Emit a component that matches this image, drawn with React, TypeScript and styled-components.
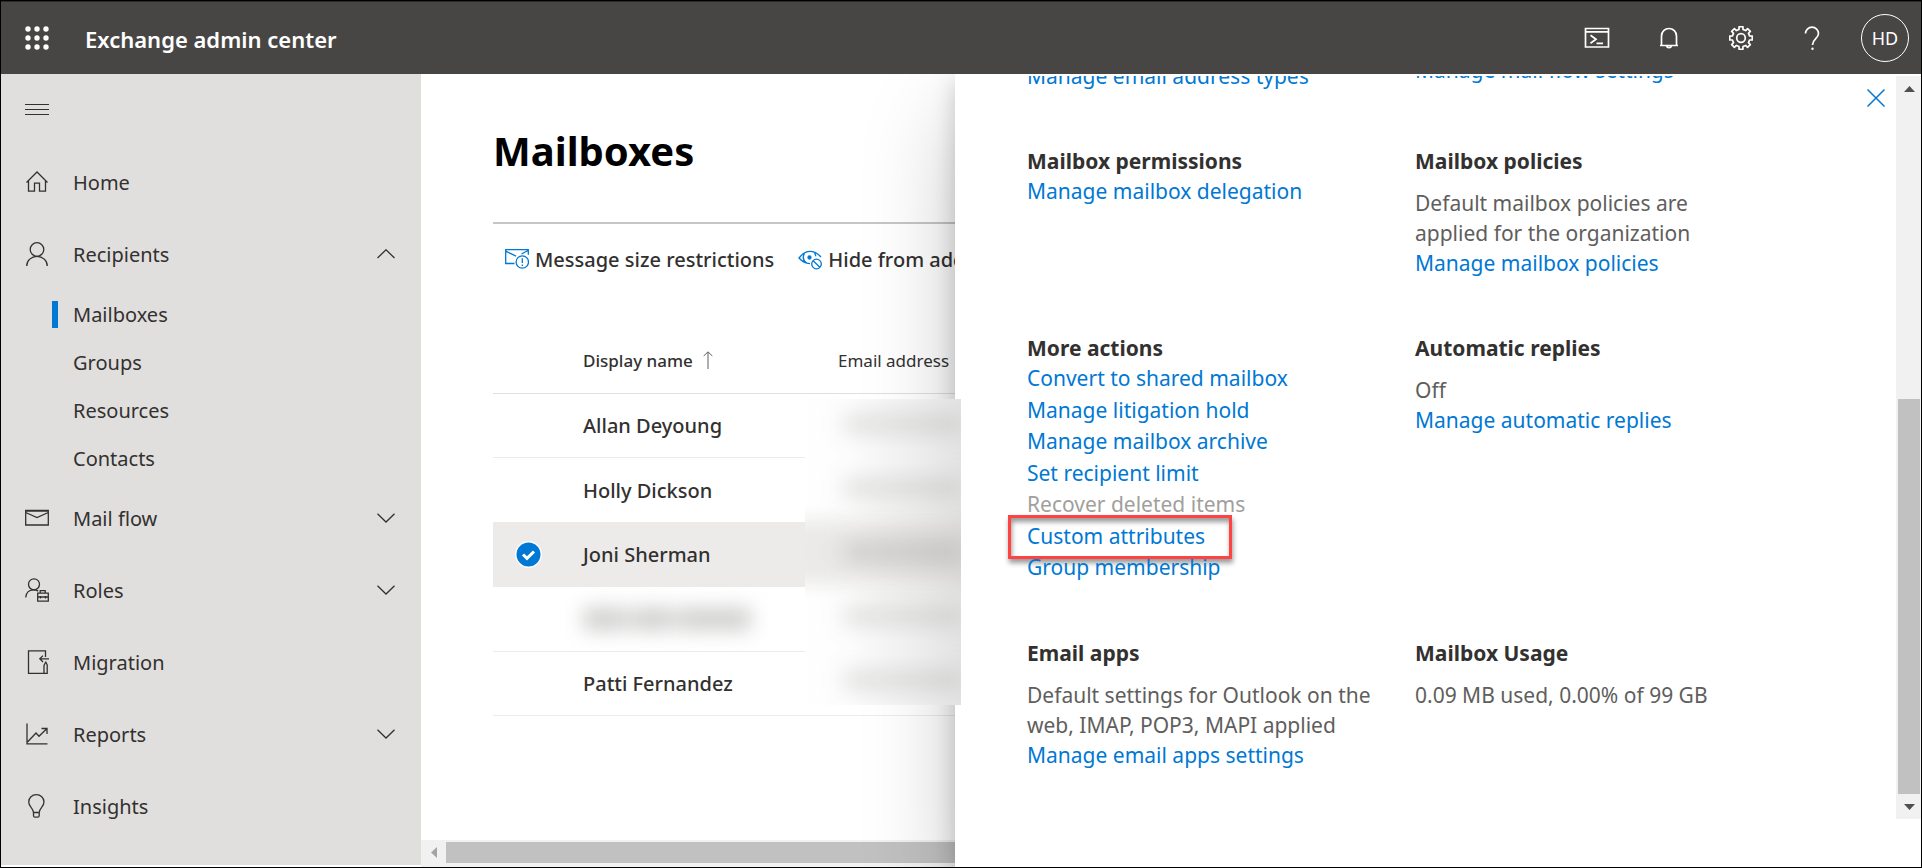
import React from "react";
import styled, { createGlobalStyle } from "styled-components";

const GlobalStyle = createGlobalStyle`
  *, *::before, *::after { box-sizing: border-box; }
  body {
    margin: 0;
    font-family: "Noto Sans", "Open Sans", sans-serif;
    font-size: 20px;
    color: #323130;
    background: #fff;
  }
  a { color: inherit; text-decoration: none; }
  button {
    margin: 0;
    padding: 0;
    border: 0;
    background: none;
    color: inherit;
    font: inherit;
    cursor: pointer;
  }
  svg { display: block; flex: none; }
`;

const Page = styled.div`
  display: flex;
  flex-direction: column;
  min-height: 100vh;
  border: 1px solid #000;
  overflow: hidden;
`;

/* ---------- header ---------- */

const Header = styled.header`
  display: flex;
  align-items: center;
  height: 73px;
  color: #fff;
  background: #484644;
  border-top: 1px solid #2b2a29;
  position: relative;
  z-index: 3;
`;

const HeaderButton = styled.button`
  display: flex;
  align-items: center;
  justify-content: center;
  width: 72px;
  height: 72px;
`;

const AppName = styled.span`
  flex: 1;
  padding: 2px 0 0 12px;
  font-size: 22px;
  font-weight: 600;
`;

const Avatar = styled.span`
  display: flex;
  align-items: center;
  justify-content: center;
  width: 48px;
  height: 48px;
  border: 1px solid #fff;
  border-radius: 50%;
  font-size: 18px;
`;

/* ---------- side navigation ---------- */

const Body = styled.div`
  display: flex;
  flex: 1;
`;

const Sidebar = styled.nav`
  flex: none;
  width: 420px;
  margin-bottom: 2px;
  background: #e1dfdd;
`;

const MenuToggle = styled.button`
  display: flex;
  align-items: center;
  justify-content: center;
  width: 72px;
  height: 72px;
`;

const NavLink = styled.a`
  display: flex;
  align-items: center;
  height: 72px;
  padding-right: 26px;
`;

const NavIcon = styled.span`
  display: flex;
  justify-content: center;
  width: 72px;
`;

const NavLabel = styled.span`
  flex: 1;
`;

const SubLink = styled.a`
  display: flex;
  align-items: center;
  gap: 15px;
  height: 48px;
  padding-left: 51px;
`;

const Marker = styled.span<{ $active: boolean }>`
  width: 6px;
  height: 27px;
  background: ${(p) => (p.$active ? "#0078d4" : "transparent")};
`;

/* ---------- mailbox list ---------- */

const Main = styled.main`
  display: flex;
  flex-direction: column;
  flex: 1;
  min-width: 0;
`;

const MainContent = styled.div`
  flex: 1;
  padding-left: 72px;
`;

const Title = styled.h1`
  margin: 0;
  padding: 47px 0 41px;
  border-bottom: 2px solid #c8c6c4;
  font-size: 40px;
  line-height: 60px;
  font-weight: 700;
  color: #000;
`;

const CommandBar = styled.div`
  display: flex;
  align-items: center;
  gap: 24px;
  height: 70px;
  padding-left: 12px;
`;

const Command = styled.button`
  display: flex;
  align-items: center;
  gap: 6px;
  white-space: nowrap;
  font-weight: 500;
`;

const TableArea = styled.div`
  position: relative;
  margin-top: 33px;
`;

const Table = styled.table`
  width: 100%;
  table-layout: fixed;
  border-collapse: separate;
  border-spacing: 0;
`;

const HeadCell = styled.th<{ $strong?: boolean; $width?: number }>`
  width: ${(p) => (p.$width ? `${p.$width}px` : "auto")};
  height: 67px;
  padding: 0;
  border-bottom: 1px solid #e1dfdd;
  text-align: left;
  white-space: nowrap;
  font-size: 17px;
  font-weight: ${(p) => (p.$strong ? 500 : 400)};
`;

const SortLabel = styled.span`
  display: flex;
  align-items: center;
  gap: 10px;
`;

const Row = styled.tr<{ $selected: boolean }>`
  height: 64px;
  background: ${(p) => (p.$selected ? "#edebe9" : "transparent")};
  &:nth-child(even) {
    height: 65px;
  }
`;

const Cell = styled.td`
  padding: 0;
  border-bottom: 1px solid #edebe9;
  font-weight: 500;
`;

const CheckLabel = styled.label`
  display: flex;
  position: relative;
  width: 27px;
  height: 27px;
  margin-left: 22px;
`;

const CheckInput = styled.input`
  position: absolute;
  inset: 0;
  margin: 0;
  opacity: 0;
`;

const HiddenName = styled.span`
  display: flex;
  gap: 4px;
  width: 168px;
  height: 22px;
  filter: blur(10px);
`;

const Smudge = styled.span<{ $grow: number }>`
  flex: ${(p) => p.$grow};
  background: #cfcecd;
`;

const AddressMask = styled.div`
  position: absolute;
  z-index: 2;
  left: 312px;
  right: -6px;
  top: 72px;
  display: flex;
  flex-direction: column;
  justify-content: center;
  height: 306px;
  overflow: hidden;
  background: linear-gradient(to right, #fff 0, #fcfcfc 30%, #efefef 70%, #e3e3e3 100%);
`;

const MaskedAddress = styled.span<{ $selected: boolean }>`
  display: flex;
  align-items: center;
  flex: none;
  height: 64px;
  margin: 0 -20px;
  padding: 0 20px 0 58px;
  background: ${(p) => (p.$selected ? "rgba(190, 186, 180, 0.3)" : "transparent")};
  filter: blur(10px);
  &::before {
    content: "";
    flex: 1;
    height: 22px;
    background: ${(p) => (p.$selected ? "rgba(120, 118, 115, 0.2)" : "rgba(120, 118, 115, 0.16)")};
  }
`;

const HorizontalBar = styled.div`
  display: flex;
  height: 27px;
  padding: 2px 0 4px;
  background: #f1f1f1;
`;

const BarArrow = styled.button`
  display: flex;
  align-items: center;
  justify-content: center;
  width: 25px;
`;

const HorizontalThumb = styled.div`
  flex: 1;
  background: #c1c1c1;
`;

/* ---------- details panel ---------- */

const Panel = styled.aside`
  position: relative;
  z-index: 1;
  display: flex;
  width: 966px;
  padding-top: 2px;
  background: #fff;
  box-shadow: 0 38px 86px rgba(0, 0, 0, 0.22), 0 7px 22px rgba(0, 0, 0, 0.18);
`;

const PanelContent = styled.div`
  flex: 1;
  display: flex;
  flex-direction: column;
  gap: 55px;
  padding: 0 93px 0 72px;
  font-size: 21px;
  line-height: 30px;
`;

const PanelRow = styled.div<{ $scrolledAway?: boolean }>`
  display: grid;
  grid-template-columns: 1fr 1fr;
  height: ${(p) => (p.$scrolledAway ? "15px" : "auto")};
  align-content: ${(p) => (p.$scrolledAway ? "end" : "start")};
  overflow: ${(p) => (p.$scrolledAway ? "hidden" : "visible")};
  white-space: nowrap;
`;

const SectionTitle = styled.h2`
  margin: 0;
  font-size: 21px;
  line-height: 30px;
  font-weight: 700;
`;

const Description = styled.p`
  margin: 12px 0 0;
  color: #605e5c;
`;

const PanelLink = styled.a<{ $raised?: boolean }>`
  display: block;
  padding-bottom: ${(p) => (p.$raised ? "6px" : "0")};
  align-self: end;
  color: #0078d4;
`;

const ActionList = styled.ul`
  margin: 0;
  padding: 0;
  list-style: none;
`;

const Action = styled.li`
  position: relative;
  line-height: 31px;
  &:nth-child(even) {
    line-height: 32px;
  }
`;

const ActionButton = styled.button`
  display: block;
  color: #0078d4;
  line-height: inherit;
  &:disabled {
    color: #a19f9d;
  }
`;

const Highlight = styled.span`
  position: absolute;
  left: -19px;
  top: -5px;
  width: 224px;
  height: 44px;
  border: 3px solid #ff4343;
  box-shadow: 1px 4px 5px rgba(0, 0, 0, 0.4), inset 1px 4px 5px rgba(0, 0, 0, 0.4);
  pointer-events: none;
`;

const CloseButton = styled.button`
  position: absolute;
  right: 36px;
  top: 15px;
`;

const VerticalBar = styled.div`
  display: flex;
  flex-direction: column;
  width: 25px;
  margin-bottom: 48px;
  padding: 0 1px 0 2px;
  background: #f1f1f1;
`;

const VerticalArrow = styled.button`
  display: flex;
  align-items: center;
  justify-content: center;
  height: 25px;
`;

const VerticalTrack = styled.div`
  flex: 1;
  display: flex;
  align-items: flex-end;
`;

const VerticalThumb = styled.div`
  width: 100%;
  height: 57%;
  background: #c1c1c1;
`;

/* ---------- icons ---------- */

type IconProps = { children: React.ReactNode; size?: number; color?: string; width?: number };

const Icon = ({ children, size = 24, color = "currentColor", width = 1.3 }: IconProps) => (
  <svg
    width={size}
    height={size}
    viewBox={`0 0 ${size} ${size}`}
    fill="none"
    stroke={color}
    strokeWidth={width}
    aria-hidden="true"
  >
    {children}
  </svg>
);

const WaffleIcon = () => (
  <Icon>
    <g fill="#fff" stroke="none">
      {[3, 12, 21].map((y) => [3, 12, 21].map((x) => <circle key={`${x}-${y}`} cx={x} cy={y} r="2.7" />))}
    </g>
  </Icon>
);

const ShellIcon = () => (
  <Icon size={26} width={1.7}>
    <path d="M1.5 3.5h23v18.5h-23zM1.5 6.800h23M6.500 10.200l5.500 4-5.500 4M12.500 18.300h6.500" />
  </Icon>
);

const BellIcon = () => (
  <Icon width={1.7}>
    <path d="M4.500 19.5V10a7.500 7.500 0 0 1 15 0v9.5M3 19.5h18M9.5 19.8a2.6 2.6 0 0 0 5 0" />
  </Icon>
);

const gearPath = () => {
  const points: string[] = [];
  for (let i = 0; i < 8; i += 1) {
    const base = (i * Math.PI) / 4 - Math.PI / 2;
    [
      [-0.23, 8.8],
      [-0.17, 11.4],
      [0.17, 11.4],
      [0.23, 8.8],
    ].forEach(([angle, radius]) => {
      const x = 12 + radius * Math.cos(base + angle);
      const y = 12 + radius * Math.sin(base + angle);
      points.push(`${x.toFixed(2)} ${y.toFixed(2)}`);
    });
  }
  return `M${points.join("L")}Z`;
};

const GearIcon = () => (
  <Icon width={1.7}>
    <path d={gearPath()} strokeLinejoin="round" />
    <circle cx="12" cy="12" r="4.3" />
  </Icon>
);

const HelpIcon = () => (
  <Icon width={1.7}>
    <path d="M4.500 7.500a6.500 6.300 0 0 1 13 0c0 5-6 5.500-6 11.500" />
    <circle cx="11.500" cy="22.700" r="1.200" fill="#fff" stroke="none" />
  </Icon>
);

const MenuIcon = () => (
  <Icon width={1}>
    <path d="M0 6.500h24M0 11.500h24M0 16.500h24" />
  </Icon>
);

const HomeIcon = () => (
  <Icon>
    <path d="M1.500 12.500L12 2l10.500 10.500M3.500 10.800v10.400h6v-8h5v8h6V10.800" />
  </Icon>
);

const PersonIcon = () => (
  <Icon>
    <circle cx="12" cy="7.500" r="6.800" />
    <path d="M1.700 24a10.300 9.700 0 0 1 20.600 0" />
  </Icon>
);

const MailIcon = () => (
  <Icon>
    <path d="M.7 4.500h22.600v14.500H.7zM.7 6.500l11.300 5 11.300-5M.7 5h22.600" />
  </Icon>
);

const RolesIcon = () => (
  <Icon>
    <circle cx="9" cy="6.300" r="5.500" />
    <path d="M.7 19.500C1 14.500 4.500 11.800 8.500 11.800c2 0 3.500.5 4.700 1.300M12.700 15.200h10.600v8H12.700zM12.700 19h10.600M15.200 15v-2.300h5V15M15.500 18v2.500M20.500 18v2.500" />
  </Icon>
);

const MigrationIcon = () => (
  <Icon>
    <path d="M20.500 7V.8H3.500v22.500h18.700v-8.500L20.500 11.500M24 8.800h-9M18 5.600l-3.200 3.200L18 12M19 23v-7.500l1.500-3" />
  </Icon>
);

const ReportsIcon = () => (
  <Icon>
    <path d="M2 1.500v20.300h20.500M2.500 20L11 11l3 3.200 8-7.700M16.500 6.500H22V12" />
  </Icon>
);

const BulbIcon = () => (
  <Icon>
    <path d="M8.500 18.500C8.500 14 3.700 13 3.700 8a7.600 7.300 0 0 1 15.300 0c0 5-4.800 6-4.800 10.500zM8.500 18.500v3.200q0 1.500 1.500 1.500h2.700q1.500 0 1.500-1.500v-3.200" />
  </Icon>
);

const Chevron = ({ up = false }: { up?: boolean }) => (
  <svg width="18" height="10" viewBox="0 0 18 10" fill="none" stroke="currentColor" strokeWidth="1.300" aria-hidden="true">
    <path d={up ? "M.5 9L9 .8 17.500 9" : "M.5 .8L9 9 17.500 .8"} />
  </svg>
);

const SizeLimitIcon = () => (
  <Icon color="#0078d4">
    <path d="M9.500 16.500H.7V2.700h22.600v5M.7 4l10.300 5.200M23 3.500L16.500 7" />
    <circle cx="17.300" cy="15" r="6.200" />
    <path d="M17.300 11.200v4.800M17.300 17.500v1.500" />
  </Icon>
);

const HideIcon = () => (
  <Icon color="#0078d4">
    <path d="M23 10C19 5.500 16 4.300 12 4.300S4 7 1 11c3 3.500 6 5.300 11 5.700M6.500 6.500c-2 3.500-1.500 7 2 9.500M16.500 6.200c.8 1 1.200 2 1.200 3" />
    <circle cx="11.500" cy="10.500" r="1.500" fill="#0078d4" />
    <circle cx="18.500" cy="17" r="4.800" />
    <path d="M15.200 13.700l6.600 6.600" />
  </Icon>
);

const SortUpIcon = () => (
  <svg width="10" height="18" viewBox="0 0 10 18" fill="none" stroke="#605e5c" aria-hidden="true">
    <path d="M5 18V1M.7 5L5 .8 9.300 5" />
  </svg>
);

const CheckIcon = () => (
  <Icon size={27}>
    <circle cx="13.500" cy="13.500" r="13.500" fill="#fff" stroke="none" />
    <circle cx="13.500" cy="13.500" r="12" fill="#0078d4" stroke="none" />
    <path d="M8 13.500l4 3.800 7-6.800" stroke="#fff" strokeWidth="3" />
  </Icon>
);

const CloseIcon = () => (
  <Icon size={18} color="#0078d4" width={1.5}>
    <path d="M.5 .5l17 17M17.500 .5l-17 17" />
  </Icon>
);

const Triangle = ({ points, color, w, h }: { points: string; color: string; w: number; h: number }) => (
  <svg width={w} height={h} viewBox={`0 0 ${w} ${h}`} aria-hidden="true">
    <polygon points={points} fill={color} />
  </svg>
);

/* ---------- data ---------- */

type NavEntry = { label: string; icon: React.ReactNode; expand?: "up" | "down"; children?: string[] };

const navigation: NavEntry[] = [
  { label: "Home", icon: <HomeIcon /> },
  { label: "Recipients", icon: <PersonIcon />, expand: "up", children: ["Mailboxes", "Groups", "Resources", "Contacts"] },
  { label: "Mail flow", icon: <MailIcon />, expand: "down" },
  { label: "Roles", icon: <RolesIcon />, expand: "down" },
  { label: "Migration", icon: <MigrationIcon /> },
  { label: "Reports", icon: <ReportsIcon />, expand: "down" },
  { label: "Insights", icon: <BulbIcon /> },
];

const mailboxes = [
  { id: "allan", name: "Allan Deyoung" },
  { id: "holly", name: "Holly Dickson" },
  { id: "joni", name: "Joni Sherman", selected: true },
  { id: "masked", name: null },
  { id: "patti", name: "Patti Fernandez" },
];

const actions = [
  { label: "Convert to shared mailbox" },
  { label: "Manage litigation hold" },
  { label: "Manage mailbox archive" },
  { label: "Set recipient limit" },
  { label: "Recover deleted items", disabled: true },
  { label: "Custom attributes", highlighted: true },
  { label: "Group membership" },
];

/* ---------- page ---------- */

export default function App() {
  return (
    <>
      <GlobalStyle />
      <Page>
        <Header>
          <HeaderButton aria-label="App launcher"><WaffleIcon /></HeaderButton>
          <AppName>Exchange admin center</AppName>
          <HeaderButton aria-label="Cloud shell"><ShellIcon /></HeaderButton>
          <HeaderButton aria-label="Notifications"><BellIcon /></HeaderButton>
          <HeaderButton aria-label="Settings"><GearIcon /></HeaderButton>
          <HeaderButton aria-label="Help"><HelpIcon /></HeaderButton>
          <HeaderButton><Avatar>HD</Avatar></HeaderButton>
        </Header>
        <Body>
          <Sidebar>
            <MenuToggle aria-label="Collapse navigation"><MenuIcon /></MenuToggle>
            {navigation.map((entry) => (
              <React.Fragment key={entry.label}>
                <NavLink href="#">
                  <NavIcon>{entry.icon}</NavIcon>
                  <NavLabel>{entry.label}</NavLabel>
                  {entry.expand && <Chevron up={entry.expand === "up"} />}
                </NavLink>
                {entry.children?.map((child) => (
                  <SubLink href="#" key={child}>
                    <Marker $active={child === "Mailboxes"} />
                    {child}
                  </SubLink>
                ))}
              </React.Fragment>
            ))}
          </Sidebar>

          <Main>
            <MainContent>
              <Title>Mailboxes</Title>
              <CommandBar>
                <Command><SizeLimitIcon />Message size restrictions</Command>
                <Command><HideIcon />Hide from address list</Command>
              </CommandBar>
              <TableArea>
                <Table>
                  <thead>
                    <tr>
                      <HeadCell $width={90} aria-label="Selection" />
                      <HeadCell $width={255} $strong>
                        <SortLabel>Display name<SortUpIcon /></SortLabel>
                      </HeadCell>
                      <HeadCell>Email address</HeadCell>
                    </tr>
                  </thead>
                  <tbody>
                    {mailboxes.map((box) => (
                      <Row key={box.id} $selected={!!box.selected}>
                        <Cell>
                          <CheckLabel>
                            <CheckInput
                              type="checkbox"
                              defaultChecked={!!box.selected}
                              aria-label={box.name ? `Select ${box.name}` : "Select mailbox"}
                            />
                            {box.selected && <CheckIcon />}
                          </CheckLabel>
                        </Cell>
                        <Cell>
                          {box.name ?? (
                            <HiddenName>
                              <Smudge $grow={3} />
                              <Smudge $grow={3} />
                              <Smudge $grow={5} />
                            </HiddenName>
                          )}
                        </Cell>
                        <Cell />
                      </Row>
                    ))}
                  </tbody>
                </Table>
                <AddressMask>
                  {mailboxes.map((box) => (
                    <MaskedAddress key={box.id} $selected={!!box.selected} />
                  ))}
                </AddressMask>
              </TableArea>
            </MainContent>
            <HorizontalBar>
              <BarArrow aria-label="Scroll left">
                <Triangle w={6} h={11} points="6,0 6,11 0,5.500" color="#a3a3a3" />
              </BarArrow>
              <HorizontalThumb />
            </HorizontalBar>
          </Main>

          <Panel>
            <PanelContent>
              <PanelRow $scrolledAway>
                <PanelLink href="#">Manage email address types</PanelLink>
                <PanelLink href="#" $raised>Manage mail flow settings</PanelLink>
              </PanelRow>
              <PanelRow>
                <section>
                  <SectionTitle>Mailbox permissions</SectionTitle>
                  <PanelLink href="#">Manage mailbox delegation</PanelLink>
                </section>
                <section>
                  <SectionTitle>Mailbox policies</SectionTitle>
                  <Description>
                    Default mailbox policies are
                    <br />
                    applied for the organization
                  </Description>
                  <PanelLink href="#">Manage mailbox policies</PanelLink>
                </section>
              </PanelRow>
              <PanelRow>
                <section>
                  <SectionTitle>More actions</SectionTitle>
                  <ActionList>
                    {actions.map((action) => (
                      <Action key={action.label}>
                        <ActionButton disabled={action.disabled}>{action.label}</ActionButton>
                        {action.highlighted && <Highlight />}
                      </Action>
                    ))}
                  </ActionList>
                </section>
                <section>
                  <SectionTitle>Automatic replies</SectionTitle>
                  <Description>Off</Description>
                  <PanelLink href="#">Manage automatic replies</PanelLink>
                </section>
              </PanelRow>
              <PanelRow>
                <section>
                  <SectionTitle>Email apps</SectionTitle>
                  <Description>
                    Default settings for Outlook on the
                    <br />
                    web, IMAP, POP3, MAPI applied
                  </Description>
                  <PanelLink href="#">Manage email apps settings</PanelLink>
                </section>
                <section>
                  <SectionTitle>Mailbox Usage</SectionTitle>
                  <Description>0.09 MB used, 0.00% of 99 GB</Description>
                </section>
              </PanelRow>
            </PanelContent>
            <VerticalBar>
              <VerticalArrow aria-label="Scroll up">
                <Triangle w={11} h={6} points="0,6 11,6 5.500,0" color="#505050" />
              </VerticalArrow>
              <VerticalTrack>
                <VerticalThumb />
              </VerticalTrack>
              <VerticalArrow aria-label="Scroll down">
                <Triangle w={11} h={6} points="0,0 11,0 5.500,6" color="#505050" />
              </VerticalArrow>
            </VerticalBar>
            <CloseButton aria-label="Close"><CloseIcon /></CloseButton>
          </Panel>
        </Body>
      </Page>
    </>
  );
}
